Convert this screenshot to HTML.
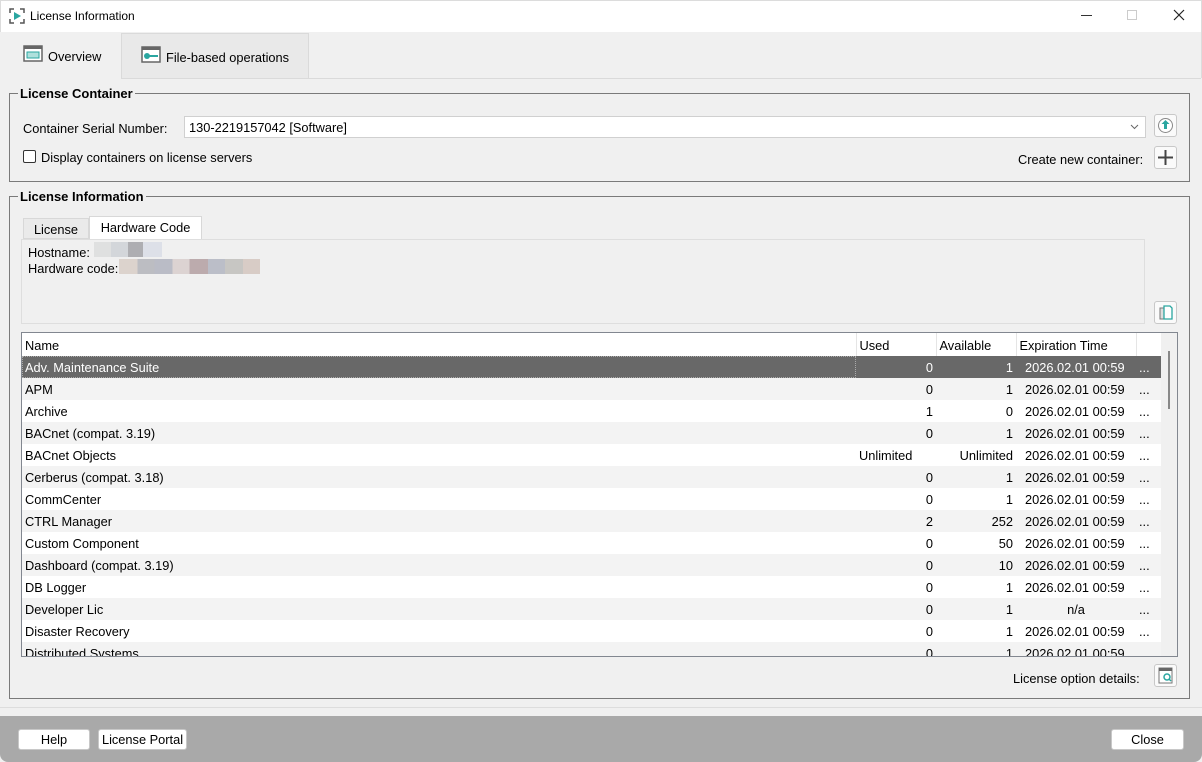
<!DOCTYPE html>
<html><head><style>
*{box-sizing:border-box;margin:0;padding:0}
body{width:1202px;height:762px;overflow:hidden;background:#f0f0f0;font-family:"Liberation Sans",sans-serif;font-size:12px;color:#000;position:relative}
.a{position:absolute}
.btn{position:absolute;background:#fff;border:1px solid #c8c8c8;border-radius:3px;text-align:center;line-height:19px;font-size:12.8px}
.ib{position:absolute;width:23px;height:23px;background:#fafafa;border:1px solid #c8c8c8;border-radius:3px}
.grp{position:absolute;border:1px solid #7a7a7a;border-top:none}
.gl{position:absolute;height:1px;background:#7a7a7a}
.gt{position:absolute;font-weight:bold;font-size:13px;background:#f0f0f0;padding:0 2px}
table{border-collapse:collapse;font-size:12.8px}
td{height:22px;padding:0 3px;white-space:nowrap}
td.r{text-align:right}
td.e{padding-left:9px}
tr.h td{height:23px;padding-top:2px}
</style></head><body>
<div class="a" style="left:0;top:0;width:1202px;height:32px;background:#fff;border:1px solid #dcdcdc;border-bottom:none"></div>
<svg class="a" style="left:9px;top:8px" width="16" height="16"><path d="M1 5V1h4M11 1h4v4M15 11v4h-4M5 15H1v-4" stroke="#555" fill="none" stroke-width="1.5"/><path d="M5 4l7 4-7 4z" fill="#2aa6a0"/></svg>
<div class="a" style="left:30px;top:9px;font-size:12px">License Information</div>
<div class="a" style="left:1081px;top:15px;width:11px;height:1px;background:#333"></div>
<div class="a" style="left:1127px;top:10px;width:10px;height:10px;border:1px solid #ccc"></div>
<svg class="a" style="left:1173px;top:9px" width="12" height="12"><path d="M1 1l10 10M11 1L1 11" stroke="#222" stroke-width="1.2"/></svg>
<div class="a" style="left:0;top:32px;width:1202px;height:46px;background:#f0f0f0;border-left:1px solid #dcdcdc;border-right:1px solid #dcdcdc"></div>
<div class="a" style="left:121px;top:33px;width:188px;height:45px;background:#e9e9e9;border:1px solid #dadada;border-bottom:none"></div>
<div class="a" style="left:1px;top:78px;width:1200px;height:1px;background:#dadada"></div>
<div class="a" style="left:0;top:32px;width:121px;height:47px;background:#f0f0f0"></div>
<svg class="a" style="left:23px;top:45px" width="20" height="17"><rect x="1" y="1" width="18" height="15" fill="#fff" stroke="#666" stroke-width="1.5"/><rect x="1" y="1" width="18" height="3" fill="#666"/><rect x="4" y="7" width="12" height="6" fill="#aee0dc" stroke="#2aa6a0"/></svg>
<div class="a" style="left:48px;top:49px;font-size:12.8px">Overview</div>
<svg class="a" style="left:141px;top:46px" width="20" height="17"><rect x="1" y="1" width="18" height="15" fill="#fff" stroke="#666" stroke-width="1.5"/><rect x="1" y="1" width="18" height="3" fill="#666"/><circle cx="6" cy="10" r="3" fill="#2aa6a0"/><rect x="8" y="9" width="9" height="2" fill="#2aa6a0"/></svg>
<div class="a" style="left:166px;top:50px;font-size:12.8px">File-based operations</div>
<div class="grp" style="left:9px;top:93px;width:1181px;height:89px"></div>
<div class="gl" style="left:9px;top:93px;width:1181px"></div>
<div class="gt" style="left:18px;top:86px">License Container</div>
<div class="a" style="left:23px;top:121px;font-size:12.8px">Container Serial Number:</div>
<div class="a" style="left:184px;top:116px;width:962px;height:22px;background:#fff;border:1px solid #d0d0d0;padding:3px 4px;font-size:12.8px">130-2219157042 [Software]<svg style="position:absolute;right:6px;top:7px" width="9" height="6"><path d="M1 1l3.5 3.5L8 1" stroke="#666" fill="none"/></svg></div>
<div class="ib" style="left:1154px;top:114px"><svg width="21" height="21"><circle cx="10.5" cy="10.5" r="7" fill="#fff" stroke="#888"/><path d="M10.5 5l-4 4h2.5v5h3v-5h2.5z" fill="#2aa6a0"/></svg></div>
<div class="a" style="left:23px;top:150px;width:13px;height:13px;border:1px solid #333;border-radius:2px;background:#fff"></div>
<div class="a" style="left:41px;top:150px;font-size:12.8px">Display containers on license servers</div>
<div class="a" style="left:1018px;top:152px;font-size:12.8px">Create new container:</div>
<div class="ib" style="left:1154px;top:146px"><svg width="21" height="21"><path d="M10.5 3v15M3 10.5h15" stroke="#444" stroke-width="2"/></svg></div>
<div class="grp" style="left:9px;top:196px;width:1181px;height:503px"></div>
<div class="gl" style="left:9px;top:196px;width:1181px"></div>
<div class="gt" style="left:18px;top:189px">License Information</div>
<div class="a" style="left:23px;top:218px;width:66px;height:21px;background:#eaeaea;border:1px solid #d8d8d8;text-align:center;line-height:21px;font-size:12.8px">License</div>
<div class="a" style="left:89px;top:216px;width:113px;height:24px;background:#fff;border:1px solid #d8d8d8;border-bottom:none;text-align:center;line-height:22px;font-size:12.8px">Hardware Code</div>
<div class="a" style="left:21px;top:239px;width:1124px;height:85px;border:1px solid #dedede;background:#f0f0f0"></div>
<div class="a" style="left:28px;top:245px;font-size:12.8px">Hostname:</div>
<div class="a" style="left:94px;top:242px;width:68px;height:15px;background:linear-gradient(90deg,#dfe0e0 0 25%,#d3d6da 25% 50%,#aeaeb2 50% 72%,#dde0e8 72%)"></div>
<div class="a" style="left:28px;top:261px;font-size:12.8px">Hardware code:</div>
<div class="a" style="left:119px;top:259px;width:141px;height:15px;background:linear-gradient(90deg,#dcd3cd 0 13%,#bcbdc2 13% 25%,#babcc6 25% 38%,#dcd3d2 38% 50%,#bcabad 50% 63%,#bbbec8 63% 75%,#c7c6c3 75% 88%,#d8ccc6 88%)"></div>
<div class="ib" style="left:1154px;top:301px"><svg width="21" height="21"><path d="M5 6h7v11H5z" fill="#ddd" stroke="#777"/><path d="M9 4h6l2 2v11H9z" fill="#fff" stroke="#2aa6a0" stroke-width="1.3"/></svg></div>
<div class="a" style="left:21px;top:332px;width:1157px;height:325px;border:1px solid #828790;background:#f0f0f0;overflow:hidden">
<div class="a" style="left:1139px;top:0;width:17px;height:323px;background:#f0f0f0"></div>
<div class="a" style="left:1146px;top:18px;width:2px;height:58px;background:#888"></div>
<svg class="a" style="left:413px;top:0" width="9" height="6"><path d="M1 5l3.5-3.5L8 5" stroke="#777" fill="none"/></svg>
<table class="a" style="left:0;top:0;width:1139px">
<colgroup><col style="width:834px"><col style="width:80px"><col style="width:80px"><col style="width:120px"><col style="width:25px"></colgroup>
<tr class="h" style="background:#fff"><td style="border-right:1px solid #e5e5e5">Name</td><td style="border-right:1px solid #e5e5e5">Used</td><td style="border-right:1px solid #e5e5e5">Available</td><td style="border-right:1px solid #e5e5e5">Expiration Time</td><td></td></tr>
<tr style="background:#686868;color:#fff"><td style="outline:1px dotted #aaa;outline-offset:-1px">Adv. Maintenance Suite</td><td class="r">0</td><td class="r">1</td><td class="e">2026.02.01 00:59</td><td>...</td></tr>
<tr style="background:#f3f3f3"><td>APM</td><td class="r">0</td><td class="r">1</td><td class="e">2026.02.01 00:59</td><td>...</td></tr>
<tr style="background:#fff"><td>Archive</td><td class="r">1</td><td class="r">0</td><td class="e">2026.02.01 00:59</td><td>...</td></tr>
<tr style="background:#f3f3f3"><td>BACnet (compat. 3.19)</td><td class="r">0</td><td class="r">1</td><td class="e">2026.02.01 00:59</td><td>...</td></tr>
<tr style="background:#fff"><td style="text-align:left">BACnet Objects</td><td>Unlimited</td><td class="r">Unlimited</td><td class="e">2026.02.01 00:59</td><td>...</td></tr>
<tr style="background:#f3f3f3"><td>Cerberus (compat. 3.18)</td><td class="r">0</td><td class="r">1</td><td class="e">2026.02.01 00:59</td><td>...</td></tr>
<tr style="background:#fff"><td>CommCenter</td><td class="r">0</td><td class="r">1</td><td class="e">2026.02.01 00:59</td><td>...</td></tr>
<tr style="background:#f3f3f3"><td>CTRL Manager</td><td class="r">2</td><td class="r">252</td><td class="e">2026.02.01 00:59</td><td>...</td></tr>
<tr style="background:#fff"><td>Custom Component</td><td class="r">0</td><td class="r">50</td><td class="e">2026.02.01 00:59</td><td>...</td></tr>
<tr style="background:#f3f3f3"><td>Dashboard (compat. 3.19)</td><td class="r">0</td><td class="r">10</td><td class="e">2026.02.01 00:59</td><td>...</td></tr>
<tr style="background:#fff"><td>DB Logger</td><td class="r">0</td><td class="r">1</td><td class="e">2026.02.01 00:59</td><td>...</td></tr>
<tr style="background:#f3f3f3"><td>Developer Lic</td><td class="r">0</td><td class="r">1</td><td style="text-align:center">n/a</td><td>...</td></tr>
<tr style="background:#fff"><td>Disaster Recovery</td><td class="r">0</td><td class="r">1</td><td class="e">2026.02.01 00:59</td><td>...</td></tr>
<tr style="background:#f3f3f3"><td>Distributed Systems</td><td class="r">0</td><td class="r">1</td><td class="e">2026.02.01 00:59</td><td>...</td></tr>
</table>
</div>
<div class="a" style="left:1013px;top:671px;font-size:12.8px">License option details:</div>
<div class="ib" style="left:1154px;top:664px"><svg width="21" height="21"><rect x="4" y="3" width="13" height="15" fill="#fff" stroke="#777"/><rect x="4" y="3" width="13" height="3" fill="#666"/><circle cx="12" cy="12" r="3" fill="none" stroke="#2aa6a0" stroke-width="1.5"/><path d="M14 14l2 2" stroke="#2aa6a0" stroke-width="1.5"/></svg></div>
<div class="a" style="left:0;top:707px;width:1202px;height:1px;background:#ddd"></div>
<div class="a" style="left:0;top:716px;width:1202px;height:46px;background:#a9a9a9;border-radius:0 0 8px 8px"></div>
<div class="btn" style="left:18px;top:729px;width:72px;height:21px">Help</div>
<div class="btn" style="left:98px;top:729px;width:89px;height:21px">License Portal</div>
<div class="btn" style="left:1111px;top:729px;width:73px;height:21px">Close</div>
</body></html>
